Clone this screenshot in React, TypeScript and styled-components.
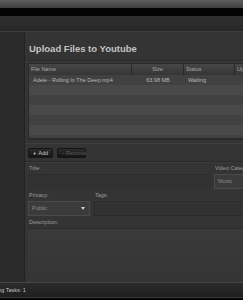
import * as React from "react";
import styled, { createGlobalStyle } from "styled-components";

const GlobalStyle = createGlobalStyle`
  html, body {
    margin: 0;
    padding: 0;
    background: #333333;
    overflow: hidden;
  }
  body {
    font-family: "Liberation Sans", Arial, sans-serif;
  }
`;

type Upload = { name: string; size: string; status: string };

const uploads: Upload[] = [
  { name: "Adele - Rolling In The Deep.mp4", size: "63.98 MB", status: "Waiting" },
];

const emptyRows = 6;

export default function App() {
  return (
    <Page>
      <GlobalStyle />
      <TopBar />
      <BlackBar />
      <NavBar />
      <Body>
        <Sidebar />
        <Main>
          <Heading>Upload Files to Youtube</Heading>
          <Table>
            <HeaderRow>
              <HeadCell $width={103}>File Name</HeadCell>
              <HeadCell $width={52} $center>
                Size
              </HeadCell>
              <HeadCell $width={51}>Status</HeadCell>
              <HeadCell $width={60}>Upload</HeadCell>
            </HeaderRow>
            {uploads.map((u) => (
              <Row key={u.name} $odd>
                <Cell $width={103} $indent>
                  {u.name}
                </Cell>
                <Cell $width={52} $center>
                  {u.size}
                </Cell>
                <Cell $width={51} $indent>
                  {u.status}
                </Cell>
                <Cell $width={60} />
              </Row>
            ))}
            {Array.from({ length: emptyRows }).map((_, i) => (
              <Row key={i} $odd={i % 2 === 1} />
            ))}
          </Table>
          <Toolbar>
            <Button>
              <span>+</span> Add
            </Button>
            <Button disabled>
              <span>-</span> Remove
            </Button>
          </Toolbar>
          <Form>
            <FieldRow>
              <Field $width={182}>
                <Label>Title:</Label>
                <TextInput />
              </Field>
              <Field $width={70}>
                <Label>Video Category:</Label>
                <Select>Music</Select>
              </Field>
            </FieldRow>
            <FieldRow>
              <Field $width={62}>
                <Label>Privacy:</Label>
                <Select>
                  Public
                  <Arrow />
                </Select>
              </Field>
              <Field $width={160}>
                <Label>Tags:</Label>
                <TextInput $boxed />
              </Field>
            </FieldRow>
            <Field $width={240}>
              <Label>Description:</Label>
              <TextArea />
            </Field>
          </Form>
        </Main>
      </Body>
      <StatusBar>
        <StatusText>Remaining Tasks: 1</StatusText>
      </StatusBar>
      <BottomLine />
    </Page>
  );
}

const Page = styled.div`
  display: flex;
  flex-direction: column;
  width: 243px;
  height: 300px;
  overflow: hidden;
`;

const TopBar = styled.div`
  height: 8px;
  background: linear-gradient(#5e5e5e, #3e3e3e);
`;

const BlackBar = styled.div`
  height: 8px;
  background: #030303;
`;

const NavBar = styled.div`
  height: 15px;
  background: linear-gradient(#303030, #272727);
  border-bottom: 1px solid #3d3d3d;
`;

const Body = styled.div`
  flex: 1;
  display: flex;
  min-height: 0;
`;

const Sidebar = styled.div`
  width: 24px;
  flex-shrink: 0;
  background: #2b2b2b;
  border-right: 1px solid #232323;
`;

const Main = styled.div`
  flex: 1;
  display: flex;
  flex-direction: column;
  background: #343434;
  padding-left: 3px;
  overflow: hidden;
`;

const Heading = styled.h1`
  margin: 0 0 2px -3px;
  padding: 11px 0 0 4px;
  height: 18px;
  font-size: 9.5px;
  font-weight: bold;
  color: #c4c4c4;
  border-bottom: 1px solid #2a2a2a;
  box-shadow: 0 1px 0 #3c3c3c;
`;

const Table = styled.div`
  width: 270px;
  display: flex;
  flex-direction: column;
  border-left: 1px solid #2a2a2a;
  border-bottom: 2px solid #2a2a2a;
  background: #3a3a3a;
  height: 77px;
  overflow: hidden;
`;

const HeaderRow = styled.div`
  display: flex;
  height: 11px;
  flex-shrink: 0;
  background: linear-gradient(#464646, #363636);
  border-top: 1px solid #2a2a2a;
`;

const HeadCell = styled.div<{ $width: number; $center?: boolean }>`
  width: ${(p) => p.$width}px;
  flex-shrink: 0;
  box-sizing: border-box;
  padding: 0 2px;
  font-size: 5.5px;
  line-height: 11px;
  color: #a8a8a8;
  text-align: ${(p) => (p.$center ? "center" : "left")};
  border-right: 1px solid #2a2a2a;
  white-space: nowrap;
  overflow: hidden;
`;

const Row = styled.div<{ $odd?: boolean }>`
  display: flex;
  height: 10px;
  flex-shrink: 0;
  background: ${(p) => (p.$odd ? "#414141" : "#494949")};
`;

const Cell = styled.div<{ $width: number; $center?: boolean; $indent?: boolean }>`
  width: ${(p) => p.$width}px;
  flex-shrink: 0;
  box-sizing: border-box;
  padding-left: ${(p) => (p.$indent ? 4 : 0)}px;
  font-size: 5.5px;
  line-height: 10px;
  color: #b8b8b8;
  text-align: ${(p) => (p.$center ? "center" : "left")};
  white-space: nowrap;
  overflow: hidden;
`;

const Toolbar = styled.div`
  display: flex;
  gap: 4px;
  margin: 3px 0 0 -3px;
  padding: 4px 0 2px 3px;
  height: 11px;
  border-top: 1px solid #3e3e3e;
  border-bottom: 1px solid #2b2b2b;
  box-shadow: 0 1px 0 #3b3b3b;
`;

const Button = styled.button`
  display: flex;
  align-items: center;
  gap: 2px;
  height: 10px;
  padding: 0 4px;
  border: 1px solid #141414;
  border-radius: 2px;
  background: linear-gradient(#2c2c2c, #151515);
  font-family: inherit;
  font-size: 5.5px;
  color: #c8c8c8;

  span {
    font-weight: bold;
  }

  &:disabled {
    color: #5e5e5e;
    width: 29px;
  }

  &:first-child {
    width: 25px;
  }
`;

const Form = styled.div`
  display: flex;
  flex-direction: column;
  gap: 3px;
  padding-top: 3px;
`;

const FieldRow = styled.div`
  display: flex;
  gap: 4px;
`;

const Field = styled.div<{ $width: number }>`
  display: flex;
  flex-direction: column;
  gap: 2px;
  width: ${(p) => p.$width}px;
  flex-shrink: 0;
`;

const Label = styled.div`
  padding-left: 1px;
  font-size: 5.5px;
  line-height: 7px;
  color: #9c9c9c;
  white-space: nowrap;
`;

const TextInput = styled.div<{ $boxed?: boolean }>`
  height: 13px;
  background: #323232;
  border: 1px solid ${(p) => (p.$boxed ? "#2a2a2a" : "#313131")};
  border-top-color: #2c2c2c;
`;

const Select = styled.div`
  position: relative;
  height: 13px;
  box-sizing: content-box;
  padding-left: 3px;
  background: #3b3b3b;
  border: 1px solid #4a4a4a;
  font-size: 5.5px;
  line-height: 13px;
  color: #8c8c8c;
`;

const Arrow = styled.span`
  position: absolute;
  right: 4px;
  top: 5px;
  border-left: 2.5px solid transparent;
  border-right: 2.5px solid transparent;
  border-top: 3px solid #d0d0d0;
`;

const TextArea = styled.div`
  height: 53px;
  background: linear-gradient(#3a3a3a, #353535);
  border-top: 1px solid #2c2c2c;
`;

const StatusBar = styled.div`
  height: 14px;
  display: flex;
  align-items: center;
  background: linear-gradient(#2b2b2b, #1f1f1f);
  border-top: 1px solid #444444;
  overflow: hidden;
`;

const StatusText = styled.span`
  margin-left: -22px;
  font-size: 5.5px;
  color: #c0c0c0;
  white-space: nowrap;
`;

const BottomLine = styled.div`
  height: 2px;
  background: #050505;
  border-top: 1px solid #3a3a3a;
`;
